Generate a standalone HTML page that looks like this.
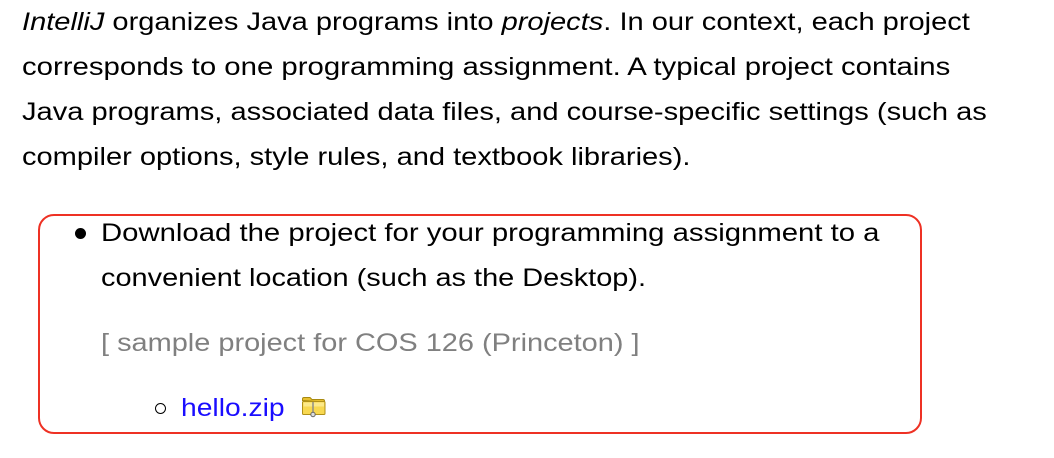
<!DOCTYPE html>
<html><head><meta charset="utf-8"><style>
body{margin:0;width:1054px;height:458px;background:#fff;position:relative;overflow:hidden;font-family:"Liberation Sans",Helvetica,Arial,sans-serif;font-size:25px;color:#000}
.l{position:absolute;white-space:nowrap;line-height:30px;transform-origin:0 50%}
.box{position:absolute;left:38px;top:214px;width:880px;height:216px;border:2px solid #ee3124;border-radius:16px}
.dot{position:absolute;left:75px;top:228px;width:11px;height:11px;border-radius:50%;background:#000}
.circ{position:absolute;left:155px;top:403px;width:9px;height:9px;border-radius:50%;border:1.3px solid #000}
</style></head><body>
<div class="l" style="left:22px;top:7px;transform:scaleX(1.162)"><i>IntelliJ</i> organizes Java programs into <i>projects</i>. In our context, each project</div>
<div class="l" style="left:22px;top:52px;transform:scaleX(1.174)">corresponds to one programming assignment. A typical project contains</div>
<div class="l" style="left:22px;top:97px;transform:scaleX(1.163)">Java programs, associated data files, and course-specific settings (such as</div>
<div class="l" style="left:22px;top:142px;transform:scaleX(1.162)">compiler options, style rules, and textbook libraries).</div>
<div class="box"></div>
<div class="dot"></div>
<div class="l" style="left:101px;top:218px;transform:scaleX(1.172)">Download the project for your programming assignment to a</div>
<div class="l" style="left:101px;top:263px;transform:scaleX(1.157)">convenient location (such as the Desktop).</div>
<div class="l" style="left:101px;top:328px;color:#808080;transform:scaleX(1.157)">[ sample project for COS 126 (Princeton) ]</div>
<div class="circ"></div>
<div class="l" style="left:181px;top:393px;color:#1a0dff;transform:scaleX(1.13)">hello.zip</div>
<svg style="position:absolute;left:301px;top:396px" width="26" height="22" viewBox="0 0 26 22">
<path d="M1.5 4.5 V3 Q1.5 1.5 3 1.5 H9 L11 3.5 H22 Q23.5 3.5 23.5 5 V6 Z" fill="#e8c030" stroke="#a88a10"/>
<rect x="1.5" y="5.5" width="22.5" height="13" rx="1" fill="#f8d850" stroke="#b09018"/>
<rect x="2.5" y="6.5" width="20.5" height="4" fill="#fce98a"/>
<line x1="12" y1="6" x2="12" y2="18" stroke="#888" stroke-width="1.4"/>
<circle cx="12" cy="18.5" r="2.2" fill="#ddd" stroke="#666"/>
</svg>
</body></html>
